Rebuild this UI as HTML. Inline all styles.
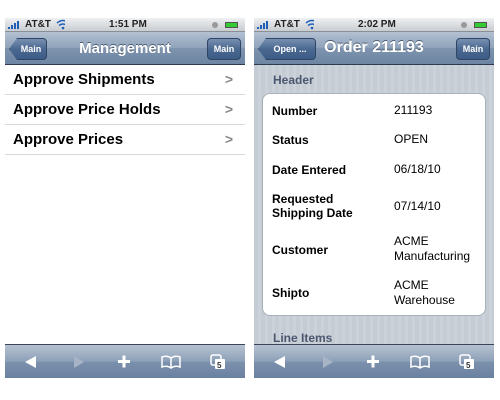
<!DOCTYPE html>
<html><head><style>
*{margin:0;padding:0;box-sizing:border-box}
body{width:500px;height:400px;background:#fff;position:relative;font-family:"Liberation Sans",sans-serif;overflow:hidden}
.scr{position:absolute;top:18px;width:240px;height:360px;overflow:hidden}
.sb{position:absolute;left:0;top:0;width:240px;height:14px;background:linear-gradient(#eef0f2,#c9ccd0);border-bottom:1px solid #8a8f96;font-size:10px;font-weight:bold;color:#222}
.nav{position:absolute;left:0;top:14px;width:240px;height:33px;background:linear-gradient(#b3c1d2,#8ea2ba 50%,#7d93ae 51%,#6e86a3);border-bottom:1px solid #2d3a4f}
.nav .t{position:absolute;left:0;width:100%;text-align:center;top:8px;color:#fff;font-weight:bold;font-size:15px;text-shadow:0 -1px 0 #4b5b70}
.btn{position:absolute;top:6px;height:22px;border-radius:4px;background:linear-gradient(#7890b0,#4a6890 50%,#3d5c85);border:1px solid #2f4566;color:#fff;font-size:9px;font-weight:bold;line-height:20px;text-align:center}
.back{clip-path:polygon(8px 0,100% 0,100% 100%,8px 100%,0 50%)}
.tb{position:absolute;left:0;bottom:0;width:240px;height:34px;background:linear-gradient(#b6c2d1,#8da0b8 50%,#7b91ad 51%,#6a81a0);border-top:1px solid #3a4658}
.row{position:absolute;left:0;width:240px;height:30px;border-bottom:1px solid #d9d9d9;font-size:15px;font-weight:bold;color:#000;padding:6px 0 0 8px}
.row span{position:absolute;right:12px;top:6px;color:#888;font-size:14px}
.stripes{background:repeating-linear-gradient(90deg,#c5ccd4 0 4px,#cbd2da 4px 7px)}
.card{position:absolute;left:8px;top:75px;width:224px;height:223px;background:#fff;border:1px solid #a9b0b8;border-radius:8px}
.l{position:absolute;left:9px;font-size:12px;font-weight:bold;line-height:14px}
.v{position:absolute;left:131px;font-size:12px;line-height:15px}
</style></head><body>

<div class="scr" style="left:5px">
<div class="sb">
<svg width="60" height="14" style="position:absolute;left:0;top:0"><rect x="3" y="9" width="2" height="2" fill="#1f5fb8"/><rect x="6" y="7" width="2" height="4" fill="#1f5fb8"/><rect x="9" y="5" width="2" height="6" fill="#1f5fb8"/><rect x="12" y="3" width="2" height="8" fill="#1f5fb8"/><path d="M52 5 q6-5 12 0 M54 7.5 q4-3 8 0" stroke="#1f5fb8" stroke-width="1.5" fill="none"/><circle cx="58" cy="10" r="1.3" fill="#1f5fb8"/></svg>
<span style="position:absolute;left:20px;top:1px">AT&amp;T</span>
<span style="position:absolute;left:104px;top:1px">1:51 PM</span>
<span style="position:absolute;left:220px;top:4px;width:13px;height:6px;background:#3c3;border:1px solid #555"></span>
<span style="position:absolute;left:207px;top:4px;width:6px;height:6px;border-radius:50%;background:#999"></span></div>
<div class="nav"><div class="t">Management</div>
<div class="btn back" style="left:4px;width:38px;padding-left:6px">Main</div>
<div class="btn" style="left:202px;width:34px">Main</div></div>
<div class="row" style="top:47px">Approve Shipments<span>&gt;</span></div>
<div class="row" style="top:77px">Approve Price Holds<span>&gt;</span></div>
<div class="row" style="top:107px">Approve Prices<span>&gt;</span></div>
<div class="tb">
<svg width="240" height="34" style="position:absolute;left:0;top:0"><polygon points="20,17 31,11 31,23" fill="#fff"/><polygon points="69,11 69,23 79,17" fill="#a6b4c6"/><rect x="113" y="15" width="12" height="3" fill="#fff"/><rect x="117.5" y="10.5" width="3" height="12" fill="#fff"/><path d="M157 12 q5-2 9 1 q4-3 9-1 v10 q-5-2-9 1 q-4-3-9-1z M166 13 v10" stroke="#fff" stroke-width="1.5" fill="none"/><rect x="206" y="10" width="10" height="10" rx="2" fill="none" stroke="#fff" stroke-width="1.5"/><rect x="210" y="14" width="10" height="10" rx="1" fill="#fff"/><text x="212" y="23" font-size="8" font-weight="bold" fill="#333" font-family="Liberation Sans">5</text></svg></div>
</div>

<div class="scr stripes" style="left:254px">
<div class="sb">
<svg width="60" height="14" style="position:absolute;left:0;top:0"><rect x="3" y="9" width="2" height="2" fill="#1f5fb8"/><rect x="6" y="7" width="2" height="4" fill="#1f5fb8"/><rect x="9" y="5" width="2" height="6" fill="#1f5fb8"/><rect x="12" y="3" width="2" height="8" fill="#1f5fb8"/><path d="M52 5 q6-5 12 0 M54 7.5 q4-3 8 0" stroke="#1f5fb8" stroke-width="1.5" fill="none"/><circle cx="58" cy="10" r="1.3" fill="#1f5fb8"/></svg>
<span style="position:absolute;left:20px;top:1px">AT&amp;T</span>
<span style="position:absolute;left:104px;top:1px">2:02 PM</span>
<span style="position:absolute;left:220px;top:4px;width:13px;height:6px;background:#3c3;border:1px solid #555"></span>
<span style="position:absolute;left:207px;top:4px;width:6px;height:6px;border-radius:50%;background:#999"></span></div>
<div class="nav"><div class="t" style="font-size:16px;top:7px">Order 211193</div>
<div class="btn back" style="left:4px;width:58px;padding-left:6px">Open ...</div>
<div class="btn" style="left:202px;width:34px">Main</div></div>
<div style="position:absolute;left:19px;top:55px;font-size:12px;font-weight:bold;color:#4c566e">Header</div>
<div class="card">
<div class="l" style="top:10px">Number</div><div class="v" style="top:9px">211193</div>
<div class="l" style="top:39px">Status</div><div class="v" style="top:38px">OPEN</div>
<div class="l" style="top:69px">Date Entered</div><div class="v" style="top:68px">06/18/10</div>
<div class="l" style="top:98px">Requested<br>Shipping Date</div><div class="v" style="top:105px">07/14/10</div>
<div class="l" style="top:149px">Customer</div><div class="v" style="top:140px">ACME<br>Manufacturing</div>
<div class="l" style="top:192px">Shipto</div><div class="v" style="top:184px">ACME<br>Warehouse</div>
</div>
<div style="position:absolute;left:19px;top:313px;font-size:12px;font-weight:bold;color:#4c566e">Line Items</div>
<div class="tb">
<svg width="240" height="34" style="position:absolute;left:0;top:0"><polygon points="20,17 31,11 31,23" fill="#fff"/><polygon points="69,11 69,23 79,17" fill="#a6b4c6"/><rect x="113" y="15" width="12" height="3" fill="#fff"/><rect x="117.5" y="10.5" width="3" height="12" fill="#fff"/><path d="M157 12 q5-2 9 1 q4-3 9-1 v10 q-5-2-9 1 q-4-3-9-1z M166 13 v10" stroke="#fff" stroke-width="1.5" fill="none"/><rect x="206" y="10" width="10" height="10" rx="2" fill="none" stroke="#fff" stroke-width="1.5"/><rect x="210" y="14" width="10" height="10" rx="1" fill="#fff"/><text x="212" y="23" font-size="8" font-weight="bold" fill="#333" font-family="Liberation Sans">5</text></svg></div>
</div>
</body></html>
